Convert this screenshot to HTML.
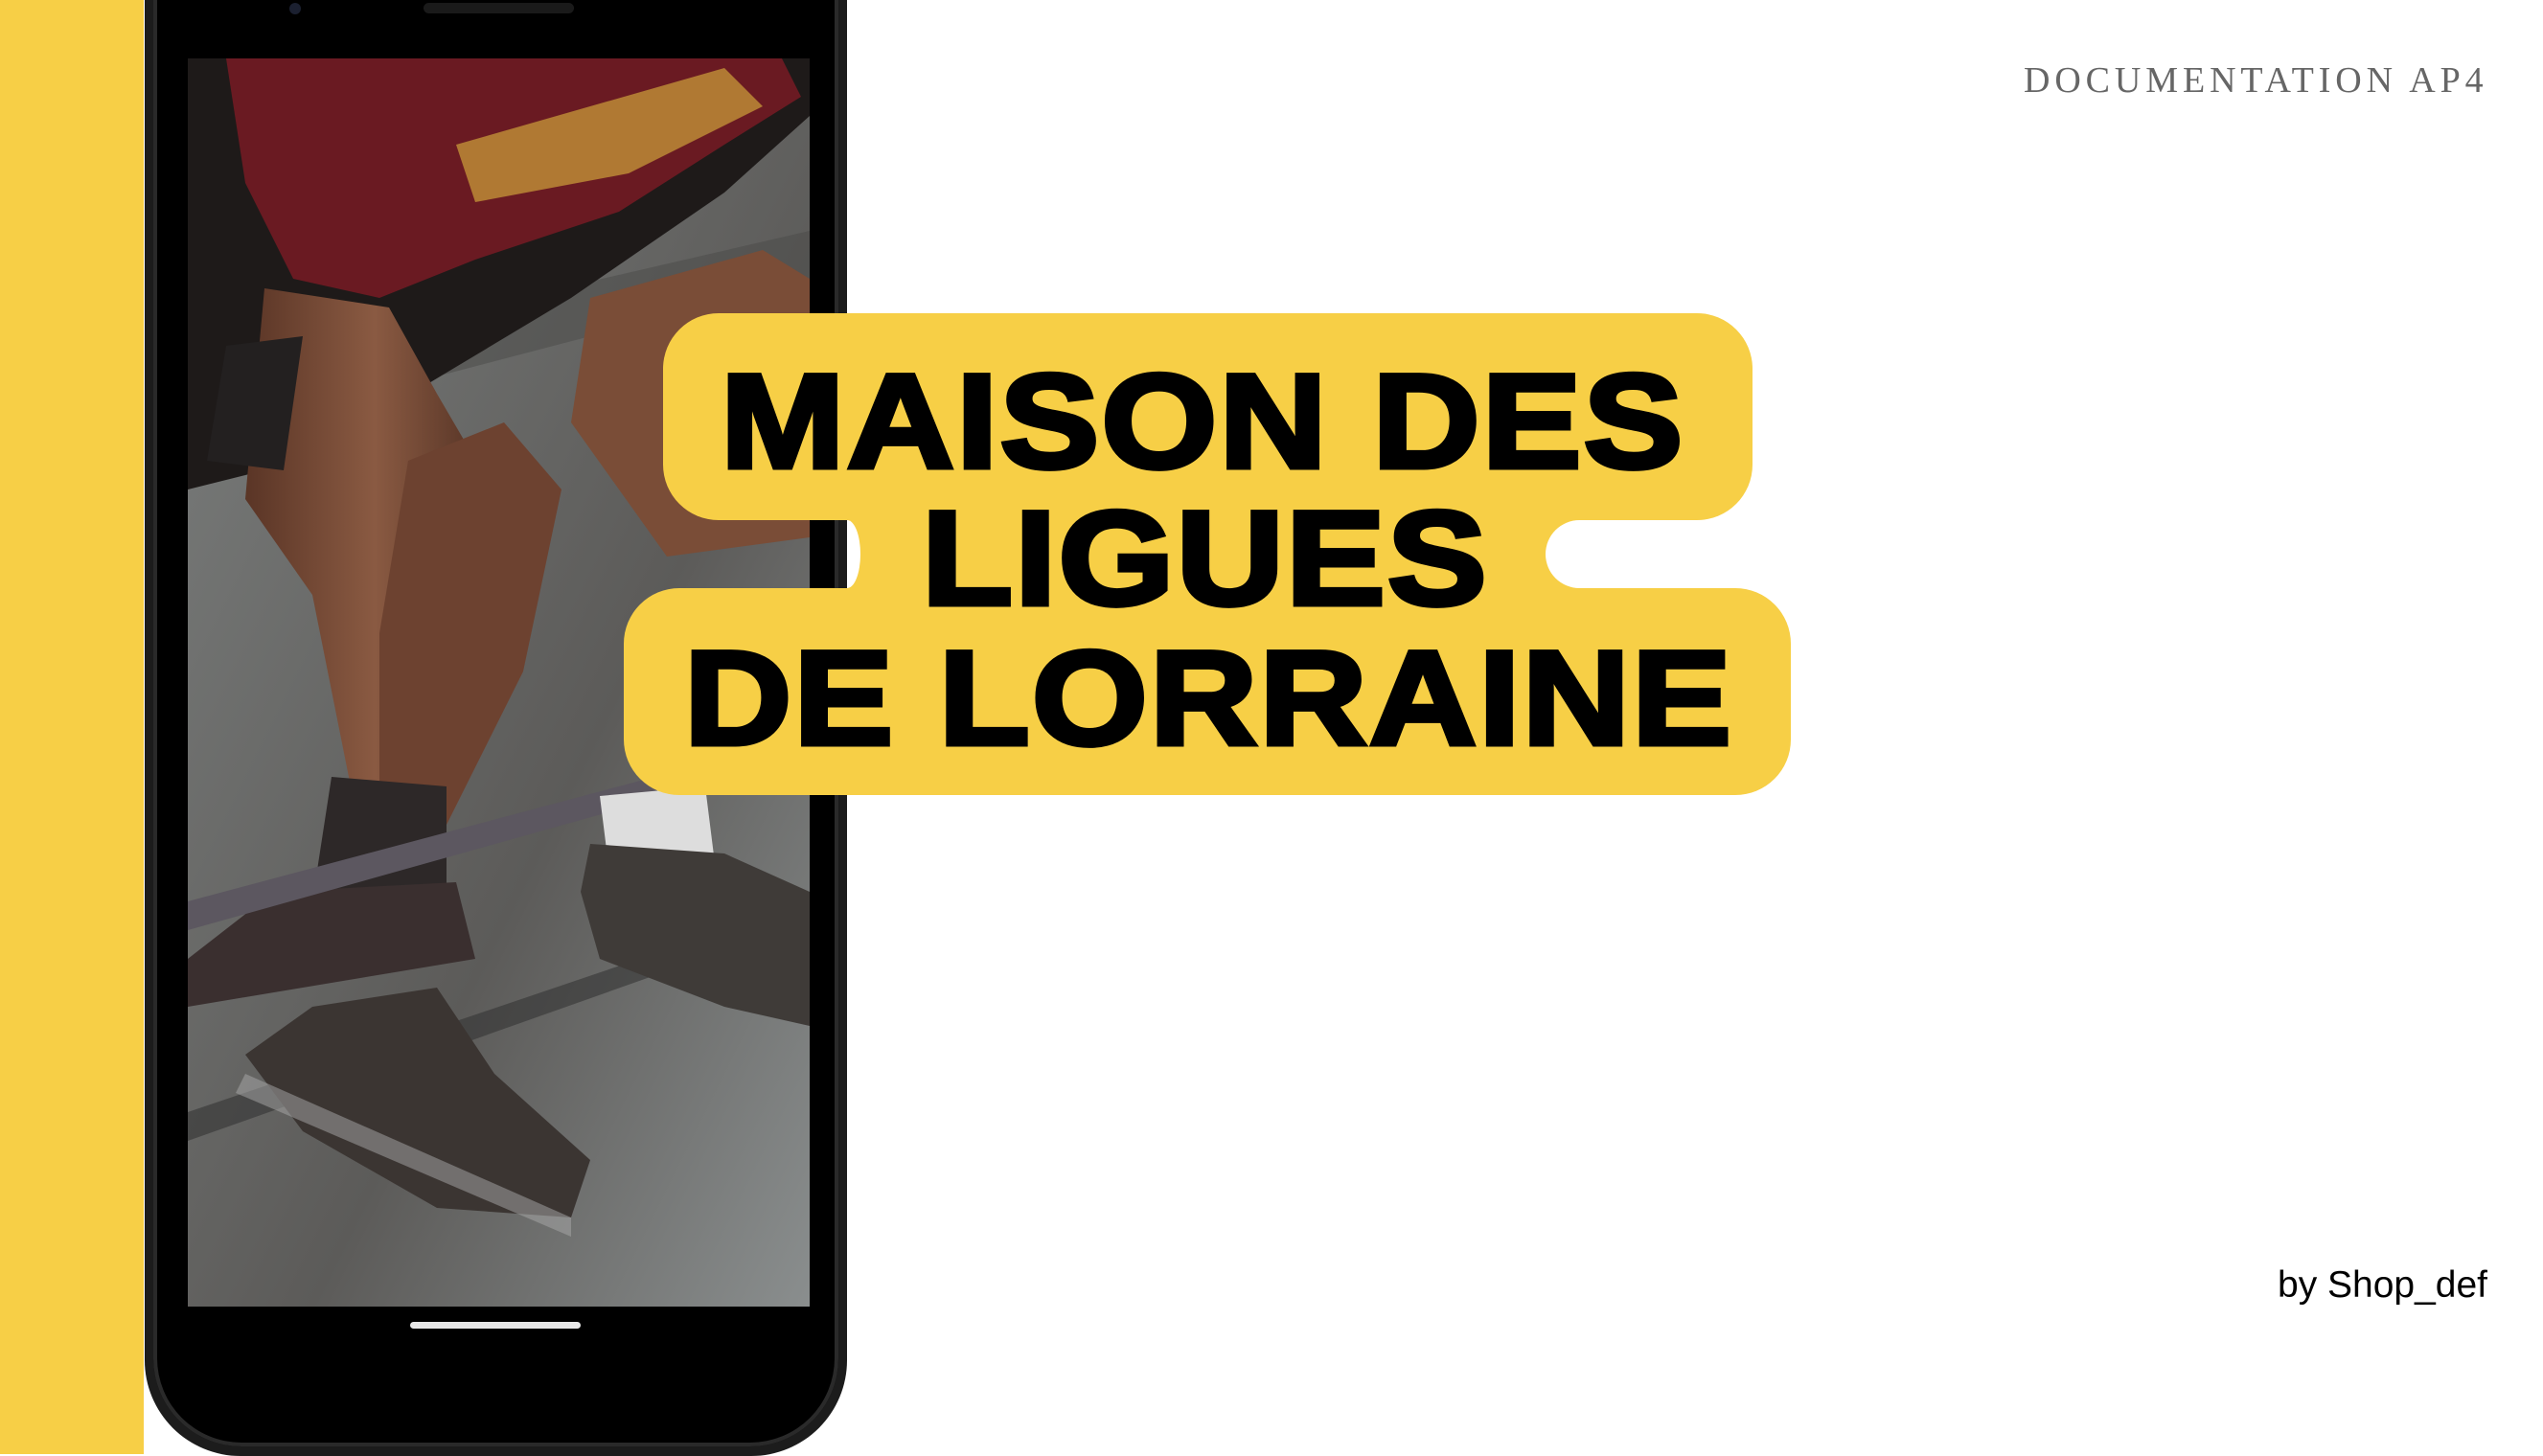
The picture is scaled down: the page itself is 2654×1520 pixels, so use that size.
<!DOCTYPE html>
<html><head><meta charset="utf-8"><style>
html,body{margin:0;padding:0}
body{width:2654px;height:1518px;position:relative;overflow:hidden;background:#fff;font-family:"Liberation Sans",sans-serif}
.abs{position:absolute}
.y{background:#F7CF46}
.t{position:absolute;font-weight:bold;color:#000;white-space:nowrap;font-size:140px;line-height:1;-webkit-text-stroke:5px #000;transform-origin:0 0;letter-spacing:2px;transform:scaleX(1.11)}
</style></head><body>
<div class="abs y" style="left:0;top:0;width:150px;height:1518px"></div>
<div class="abs" style="left:151px;top:-120px;width:733px;height:1640px;background:#1c1c1c;border-radius:100px"></div>
<div class="abs" style="left:160px;top:-120px;width:715px;height:1630px;background:#000;border-radius:92px;box-shadow:inset 0 0 0 4px #2a2a2a"></div>
<div class="abs" style="left:442px;top:3px;width:157px;height:11px;background:#1a1a1a;border-radius:6px"></div>
<div class="abs" style="left:302px;top:3px;width:12px;height:12px;background:#1b2030;border-radius:50%"></div>
<div class="abs" style="left:428px;top:1380px;width:178px;height:7px;background:#e8e8e8;border-radius:4px"></div>
<svg class="abs" style="left:196px;top:61px" width="649" height="1303" viewBox="0 0 649 1303">
<defs>
<linearGradient id="fl" x1="0" y1="0" x2="1" y2="1"><stop offset="0" stop-color="#7d807f"/><stop offset="0.6" stop-color="#5c5b59"/><stop offset="1" stop-color="#8a8e8e"/></linearGradient>
<linearGradient id="sk" x1="0" y1="0" x2="1" y2="0"><stop offset="0" stop-color="#5a3526"/><stop offset="0.5" stop-color="#8a5a42"/><stop offset="1" stop-color="#4b2c20"/></linearGradient>
</defs>
<rect width="649" height="1303" fill="url(#fl)"/>
<path d="M0 330 L649 180 L649 230 L0 400Z" fill="#4a4947" opacity=".5"/>
<path d="M0 1100 L649 880 L649 900 L0 1130Z" fill="#333" opacity=".6"/>
<path d="M0 0 H649 V60 L560 140 L400 250 L250 340 L120 420 L0 450Z" fill="#1e1a19"/>
<path d="M40 0 H620 L640 40 L560 90 L450 160 L300 210 L200 250 L110 230 L60 130Z" fill="#6a1a22"/>
<path d="M280 90 L560 10 L600 50 L460 120 L300 150Z" fill="#c89a3a" opacity=".75"/>
<path d="M80 240 L210 260 L260 350 L330 470 L300 640 L250 760 L170 760 L130 560 L60 460Z" fill="url(#sk)"/>
<path d="M230 420 L330 380 L390 450 L350 640 L270 800 L200 800 L200 600Z" fill="#6d4230"/>
<path d="M420 250 L600 200 L649 230 L649 500 L500 520 L400 380Z" fill="#7a4d37"/>
<path d="M40 300 L120 290 L100 430 L20 420Z" fill="#232020"/>
<path d="M150 750 L270 760 L270 870 L130 880Z" fill="#2d2828"/>
<path d="M90 870 L280 860 L300 940 L60 980 L0 990 L0 940Z" fill="#3a2f2f"/>
<path d="M0 880 L600 720 L606 740 L0 910Z" fill="#5c5760"/>
<path d="M430 770 L540 760 L550 840 L440 850Z" fill="#ddd"/>
<path d="M420 820 L560 830 L649 870 L649 1010 L560 990 L430 940 L410 870Z" fill="#3f3b38"/>
<path d="M130 990 L260 970 L320 1060 L420 1150 L400 1210 L260 1200 L120 1120 L60 1040Z" fill="#3b3532"/>
<path d="M60 1060 L400 1210 L400 1230 L50 1080Z" fill="#aaa" opacity=".5"/>
</svg>
<div class="abs y" style="left:692px;top:327px;width:1137px;height:216px;border-radius:58px"></div>
<div class="abs y" style="left:651px;top:614px;width:1218px;height:216px;border-radius:58px"></div>
<div class="abs y" style="left:884px;top:500px;width:766px;height:150px"></div>
<div class="abs" style="left:884px;top:543px;width:14px;height:71px;background:#fff;border-radius:0 14px 14px 0 / 0 36px 36px 0"></div>
<div class="abs" style="left:1613px;top:543px;width:300px;height:71px;background:#fff;border-radius:36px 0 0 36px"></div>
<div class="t" style="left:752px;top:370px">MAISON DES</div>
<div class="t" style="left:962px;top:513px">LIGUES</div>
<div class="t" style="left:714px;top:659px">DE LORRAINE</div>
<div class="abs" style="left:2112px;top:62px;font-family:'Liberation Serif',serif;font-size:38px;letter-spacing:4.9px;color:#666;white-space:nowrap">DOCUMENTATION AP4</div>
<div class="abs" style="left:2377px;top:1320px;font-size:39px;color:#000;white-space:nowrap">by Shop_def</div>
</body></html>
